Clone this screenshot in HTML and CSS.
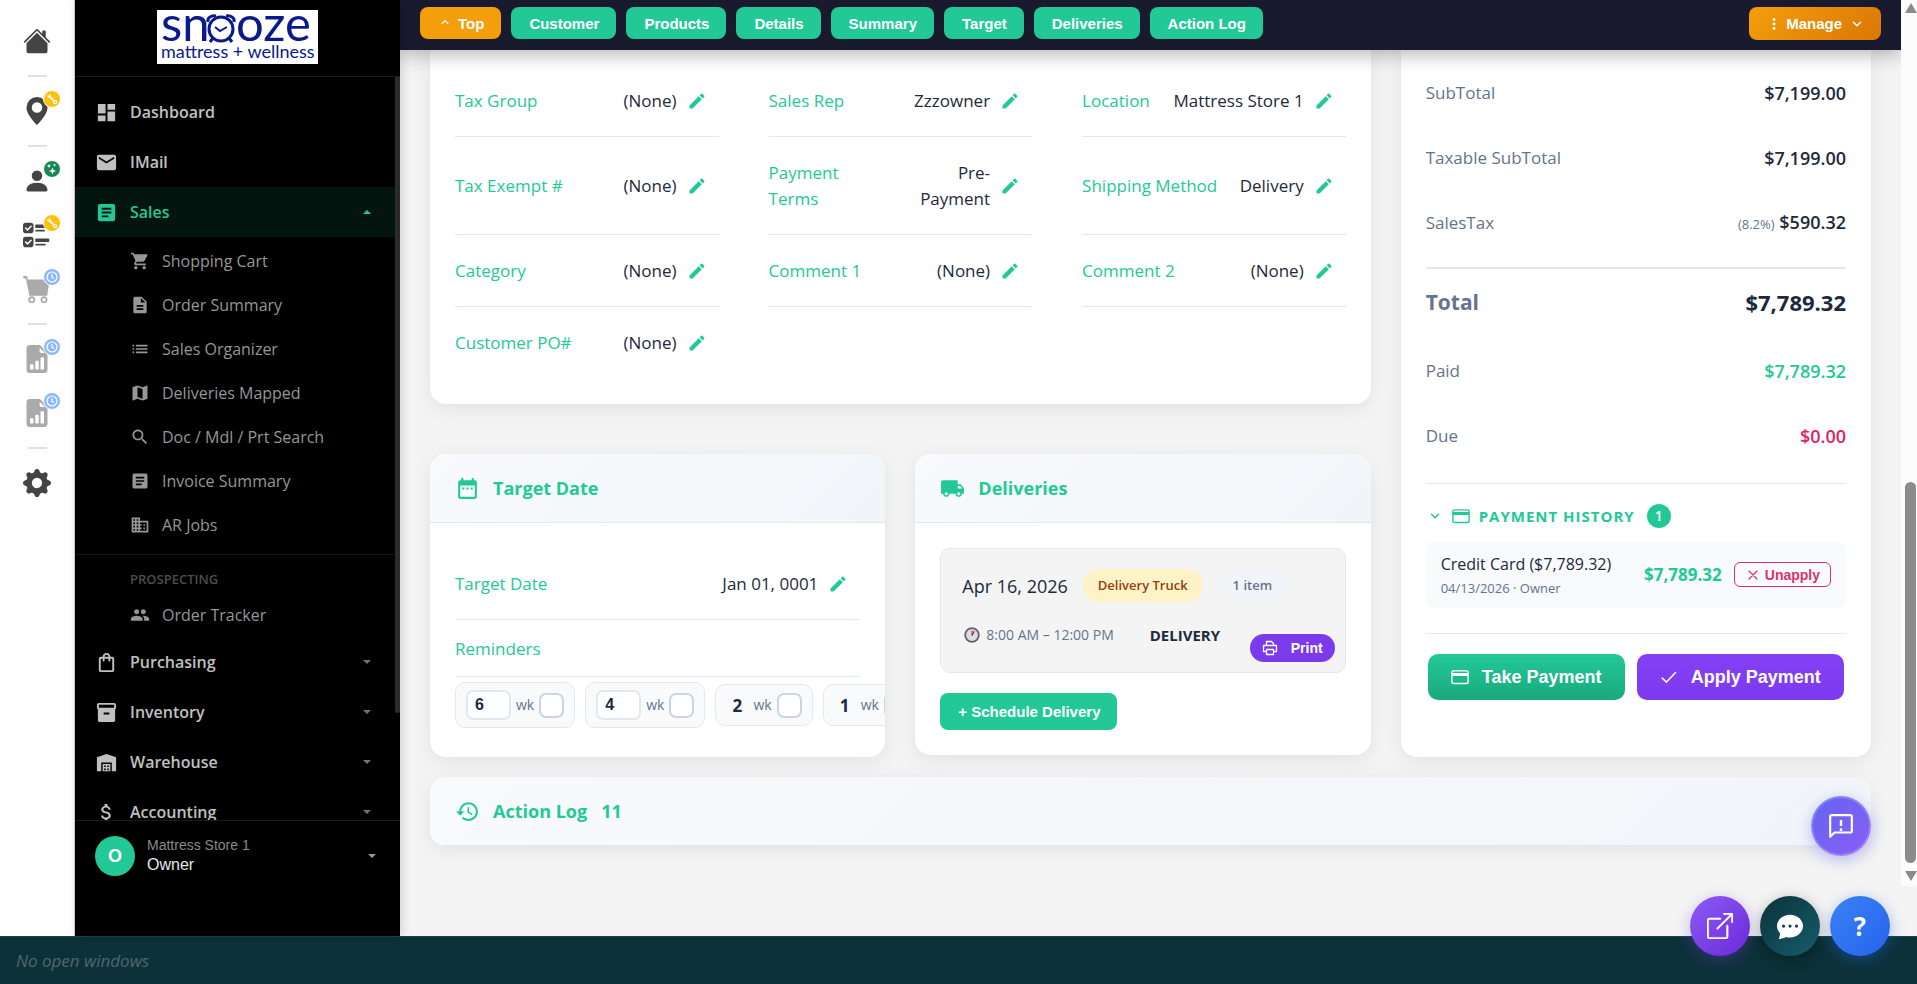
FILE: index.html
```html
<!DOCTYPE html>
<html lang="en">
<head>
    <meta charset="UTF-8">
    <meta name="viewport" content="width=device-width, initial-scale=1.0">
    <title>Sales Order</title>
    <link rel="stylesheet" href="styles.css">
</head>
<body>
    <!-- Icon sprite -->
    <svg class="sprite" aria-hidden="true">
        <symbol id="i-house" viewBox="0 0 16 16"><path d="M8.707 1.5a1 1 0 0 0-1.414 0L.646 8.146a.5.5 0 0 0 .708.708L8 2.207l6.646 6.647a.5.5 0 0 0 .708-.708L13 5.793V2.5a.5.5 0 0 0-.5-.5h-1a.5.5 0 0 0-.5.5v1.293z"/><path d="m8 3.293 6 6V13.5a1.5 1.5 0 0 1-1.5 1.5h-9A1.5 1.5 0 0 1 2 13.5V9.293z"/></symbol>
        <symbol id="i-pin" viewBox="0 0 16 16"><path d="M8 16s6-5.686 6-10A6 6 0 0 0 2 6c0 4.314 6 10 6 10m0-7a3 3 0 1 1 0-6 3 3 0 0 1 0 6"/></symbol>
        <symbol id="i-person" viewBox="0 0 16 16"><path d="M3 14s-1 0-1-1 1-4 6-4 6 3 6 4-1 1-1 1zm5-6a3 3 0 1 0 0-6 3 3 0 0 0 0 6"/></symbol>
        <symbol id="i-checks" viewBox="0 0 16 16"><rect x="0" y="1" width="6" height="6" rx="1.6"/><rect x="0" y="9" width="6" height="6" rx="1.6"/><path d="M1.5 4l1.1 1.1 2-2.1M1.5 12l1.1 1.1 2-2.1" fill="none" stroke="#fff" stroke-width=".9" stroke-linecap="round"/><rect x="7" y="2" width="8" height="2" rx=".5"/><rect x="7" y="5" width="5.500" height="1" rx=".5"/><rect x="7" y="10" width="8" height="2" rx=".5"/><rect x="7" y="13" width="6" height="1" rx=".5"/></symbol>
        <symbol id="i-bigcart" viewBox="0 0 16 16"><path d="M.5 1H2l.4 2h12.300l-1.200 8.500H4L2 1.600H.5z" stroke="currentColor" stroke-width=".8" stroke-linejoin="round"/><path d="M5 12.600a1.500 1.500 0 1 0 0 3 1.500 1.500 0 0 0 0-3zm7 0a1.500 1.500 0 1 0 0 3 1.500 1.500 0 0 0 0-3z" fill="#fff" stroke="currentColor" stroke-width="1"/></symbol>
        <symbol id="i-report" viewBox="0 0 16 16"><path d="M9.293 0H4a2 2 0 0 0-2 2v12a2 2 0 0 0 2 2h8a2 2 0 0 0 2-2V4.707A1 1 0 0 0 13.707 4L10 .293A1 1 0 0 0 9.293 0M9.500 3.500v-2l3 3h-2a1 1 0 0 1-1-1m.5 10v-6a.5.5 0 0 1 .5-.5h1a.5.5 0 0 1 .5.5v6a.5.5 0 0 1-.5.5h-1a.5.5 0 0 1-.5-.5m-2.500.5a.5.5 0 0 1-.5-.5v-4a.5.5 0 0 1 .5-.5h1a.5.5 0 0 1 .5.5v4a.5.5 0 0 1-.5.5zm-3 0a.5.5 0 0 1-.5-.5v-2a.5.5 0 0 1 .5-.5h1a.5.5 0 0 1 .5.5v2a.5.5 0 0 1-.5.5z"/></symbol>
        <symbol id="i-gear" viewBox="0 0 16 16"><path d="M9.405 1.050c-.413-1.400-2.397-1.400-2.810 0l-.1.34a1.464 1.464 0 0 1-2.105.872l-.31-.17c-1.283-.698-2.686.705-1.987 1.987l.169.311c.446.82.023 1.841-.872 2.105l-.34.1c-1.400.413-1.400 2.397 0 2.810l.34.1a1.464 1.464 0 0 1 .872 2.105l-.17.31c-.698 1.283.705 2.686 1.987 1.987l.311-.169a1.464 1.464 0 0 1 2.105.872l.1.34c.413 1.400 2.397 1.400 2.810 0l.1-.34a1.464 1.464 0 0 1 2.105-.872l.31.17c1.283.698 2.686-.705 1.987-1.987l-.169-.311a1.464 1.464 0 0 1 .872-2.105l.34-.1c1.400-.413 1.400-2.397 0-2.810l-.34-.1a1.464 1.464 0 0 1-.872-2.105l.17-.31c.698-1.283-.705-2.686-1.987-1.987l-.311.169a1.464 1.464 0 0 1-2.105-.872zM8 10.930a2.929 2.929 0 1 1 0-5.860 2.929 2.929 0 0 1 0 5.858z"/></symbol>
        <symbol id="i-wrench" viewBox="0 0 16 16"><path d="M6 6l4.500 4.500" stroke="#fff" stroke-width="2" fill="none"/><path d="M3 4.600 5 4.800 5 3A2.500 2.500 0 0 1 6.600 6.600 2.500 2.500 0 0 1 3 4.600z" fill="#fff"/><circle cx="11.200" cy="11.200" r="1.500" fill="none" stroke="#fff" stroke-width="1.300"/></symbol>
        <symbol id="i-sparkle" viewBox="0 0 16 16"><path d="M8.500 6.500l1 2.500 2.500 1-2.500 1-1 2.500-1-2.500-2.500-1 2.500-1zM5 3l.7 1.300L7 5l-1.300.7L5 7l-.7-1.300L3 5l1.300-.7zM10.500 2.500l.5 1.100 1.100.5-1.100.5-.5 1.100-.5-1.100-1.100-.5 1.100-.5z" fill="#fff"/></symbol>
        <symbol id="i-clock" viewBox="0 0 16 16"><circle cx="8" cy="8" r="5" fill="none" stroke="#fff" stroke-width="1.200"/><path d="M8 5v3.300l2 1.200" fill="none" stroke="#fff" stroke-width="1.200"/></symbol>

        <symbol id="i-dashboard" viewBox="0 0 24 24"><path d="M3 13h8V3H3v10zm0 8h8v-6H3v6zm10 0h8V11h-8v10zm0-18v6h8V3h-8z"/></symbol>
        <symbol id="i-mail" viewBox="0 0 24 24"><path d="M20 4H4c-1.100 0-1.990.9-1.990 2L2 18c0 1.100.9 2 2 2h16c1.100 0 2-.9 2-2V6c0-1.100-.9-2-2-2zm0 4l-8 5-8-5V6l8 5 8-5v2z"/></symbol>
        <symbol id="i-article" viewBox="0 0 24 24"><path d="M19 3H5c-1.100 0-2 .9-2 2v14c0 1.100.9 2 2 2h14c1.100 0 2-.9 2-2V5c0-1.100-.9-2-2-2zm-5 14H7v-2h7v2zm3-4H7v-2h10v2zm0-4H7V7h10v2z"/></symbol>
        <symbol id="i-cart" viewBox="0 0 24 24"><path d="M7 18c-1.100 0-1.990.9-1.990 2S5.900 22 7 22s2-.9 2-2-.9-2-2-2zM1 2v2h2l3.600 7.590-1.350 2.450c-.16.28-.25.61-.25.96 0 1.100.9 2 2 2h12v-2H7.420c-.14 0-.25-.11-.25-.25l.03-.12.9-1.630h7.450c.75 0 1.410-.41 1.750-1.030l3.580-6.490c.08-.14.12-.31.12-.48 0-.55-.45-1-1-1H5.210l-.94-2H1zm16 16c-1.100 0-1.990.9-1.990 2s.89 2 1.990 2 2-.9 2-2-.9-2-2-2z"/></symbol>
        <symbol id="i-doc" viewBox="0 0 24 24"><path d="M14 2H6c-1.100 0-1.990.9-1.990 2L4 20c0 1.100.89 2 1.990 2H18c1.100 0 2-.9 2-2V8l-6-6zm2 16H8v-2h8v2zm0-4H8v-2h8v2zm-3-5V3.500L18.500 9H13z"/></symbol>
        <symbol id="i-list" viewBox="0 0 24 24"><path d="M3 13h2v-2H3v2zm0 4h2v-2H3v2zm0-8h2V7H3v2zm4 4h14v-2H7v2zm0 4h14v-2H7v2zM7 7v2h14V7H7z"/></symbol>
        <symbol id="i-map" viewBox="0 0 24 24"><path d="M20.500 3l-.16.03L15 5.100 9 3 3.360 4.900c-.21.07-.36.25-.36.48V20.500c0 .28.22.5.5.5l.16-.03L9 18.900l6 2.100 5.640-1.900c.21-.07.36-.25.36-.48V3.500c0-.28-.22-.5-.5-.5zM15 19l-6-2.110V5l6 2.110V19z"/></symbol>
        <symbol id="i-search" viewBox="0 0 24 24"><path d="M15.500 14h-.79l-.28-.27C15.410 12.590 16 11.110 16 9.500 16 5.910 13.090 3 9.500 3S3 5.910 3 9.500 5.910 16 9.500 16c1.610 0 3.090-.59 4.230-1.570l.27.28v.79l5 4.990L20.490 19l-4.990-5zm-6 0C7.010 14 5 11.990 5 9.500S7.010 5 9.500 5 14 7.010 14 9.500 11.990 14 9.500 14z"/></symbol>
        <symbol id="i-business" viewBox="0 0 24 24"><path d="M12 7V3H2v18h20V7H12zM6 19H4v-2h2v2zm0-4H4v-2h2v2zm0-4H4V9h2v2zm0-4H4V5h2v2zm4 12H8v-2h2v2zm0-4H8v-2h2v2zm0-4H8V9h2v2zm0-4H8V5h2v2zm10 12h-8v-2h2v-2h-2v-2h2v-2h-2V9h8v10zm-2-8h-2v2h2v-2zm0 4h-2v2h2v-2z"/></symbol>
        <symbol id="i-people" viewBox="0 0 24 24"><path d="M16 11c1.660 0 2.990-1.340 2.990-3S17.660 5 16 5c-1.660 0-3 1.340-3 3s1.340 3 3 3zm-8 0c1.660 0 2.990-1.340 2.990-3S9.660 5 8 5C6.340 5 5 6.340 5 8s1.340 3 3 3zm0 2c-2.330 0-7 1.170-7 3.500V19h14v-2.500c0-2.330-4.670-3.500-7-3.500zm8 0c-.29 0-.62.02-.97.05 1.160.84 1.970 1.970 1.970 3.450V19h6v-2.500c0-2.330-4.670-3.500-7-3.500z"/></symbol>
        <symbol id="i-bag" viewBox="0 0 24 24"><path d="M18 6h-2c0-2.210-1.790-4-4-4S8 3.790 8 6H6c-1.100 0-2 .9-2 2v12c0 1.100.9 2 2 2h12c1.100 0 2-.9 2-2V8c0-1.100-.9-2-2-2zm-6-2c1.100 0 2 .9 2 2h-4c0-1.100.9-2 2-2zm6 16H6V8h2v2c0 .55.45 1 1 1s1-.45 1-1V8h4v2c0 .55.45 1 1 1s1-.45 1-1V8h2v12z"/></symbol>
        <symbol id="i-inventory" viewBox="0 0 24 24"><path d="M20 2H4c-1 0-2 .9-2 2v3.010c0 .72.43 1.340 1 1.690V20c0 1.100 1.100 2 2 2h14c.9 0 2-.9 2-2V8.700c.57-.35 1-.97 1-1.690V4c0-1.100-1-2-2-2zm-5 12H9v-2h6v2zm5-7H4V4h16v3z"/></symbol>
        <symbol id="i-warehouse" viewBox="0 0 24 24"><path fill-rule="evenodd" d="M22 21V6.500L12 3 2 6.500V21h4.500v-9h11v9H22zM8 13.500h8V21H8zM9.500 15v1.800h1.700V15zM12.800 15v1.800h1.700V15zM9.500 18.200V20h1.700v-1.800zM12.800 18.200V20h1.700v-1.800z"/></symbol>
        <symbol id="i-money" viewBox="0 0 24 24"><path d="M11.800 10.900c-2.270-.59-3-1.200-3-2.150 0-1.090 1.010-1.850 2.700-1.850 1.780 0 2.440.85 2.500 2.100h2.210c-.07-1.720-1.120-3.300-3.210-3.810V3h-3v2.160c-1.940.42-3.500 1.680-3.500 3.610 0 2.310 1.910 3.460 4.700 4.130 2.500.6 3 1.480 3 2.410 0 .69-.49 1.790-2.700 1.790-2.060 0-2.870-.92-2.980-2.100h-2.200c.12 2.190 1.760 3.420 3.680 3.830V21h3v-2.150c1.950-.37 3.500-1.500 3.500-3.550 0-2.840-2.430-3.810-4.700-4.400z"/></symbol>
        <symbol id="i-caret" viewBox="0 0 8 8"><path d="M0 2h8L4 6z"/></symbol>
        <symbol id="i-edit" viewBox="0 0 24 24"><path d="M3 17.250V21h3.750L17.810 9.940l-3.750-3.750L3 17.250zM20.710 7.040c.39-.39.39-1.020 0-1.410l-2.340-2.340c-.39-.39-1.020-.39-1.410 0l-1.830 1.830 3.750 3.750 1.830-1.830z"/></symbol>
        <symbol id="i-calendar" viewBox="0 0 24 24"><path d="M9 11H7v2h2v-2zm4 0h-2v2h2v-2zm4 0h-2v2h2v-2zm2-7h-1V2h-2v2H8V2H6v2H5c-1.110 0-1.990.9-1.990 2L3 20c0 1.100.89 2 2 2h14c1.100 0 2-.9 2-2V6c0-1.100-.9-2-2-2zm0 16H5V9h14v11z"/></symbol>
        <symbol id="i-truck" viewBox="0 0 24 24"><path d="M20 8h-3V4H3c-1.100 0-2 .9-2 2v11h2c0 1.660 1.340 3 3 3s3-1.340 3-3h6c0 1.660 1.340 3 3 3s3-1.340 3-3h2v-5l-3-4zM6 18.500c-.83 0-1.500-.67-1.500-1.500s.67-1.500 1.500-1.500 1.500.67 1.500 1.500-.67 1.500-1.500 1.500zm13.500-9l1.960 2.500H17V9.500h2.500zm-1.500 9c-.83 0-1.500-.67-1.500-1.500s.67-1.500 1.500-1.500 1.500.67 1.500 1.500-.67 1.500-1.500 1.500z"/></symbol>
        <symbol id="i-history" viewBox="0 0 24 24"><path d="M13 3c-4.970 0-9 4.030-9 9H1l3.890 3.890.07.14L9 12H6c0-3.870 3.130-7 7-7s7 3.130 7 7-3.130 7-7 7c-1.930 0-3.680-.79-4.940-2.060l-1.420 1.420C8.270 19.990 10.510 21 13 21c4.970 0 9-4.030 9-9s-4.030-9-9-9zm-1 5v5l4.280 2.540.72-1.210-3.500-2.080V8H12z"/></symbol>
        <symbol id="i-chev-down" viewBox="0 0 10 10"><path d="M1.500 3.200 5 6.700l3.500-3.500" fill="none" stroke="currentColor" stroke-width="1.500" stroke-linecap="round"/></symbol>
        <symbol id="i-chev-up" viewBox="0 0 10 10"><path d="M2 5.700 5 2.700l3 3" fill="none" stroke="currentColor" stroke-width="1.200" stroke-linecap="round"/></symbol>
        <symbol id="i-dots" viewBox="0 0 4 14"><circle cx="2" cy="2.500" r="1.400"/><circle cx="2" cy="7" r="1.400"/><circle cx="2" cy="11.500" r="1.400"/></symbol>
        <symbol id="i-card" viewBox="0 0 18 18"><rect x=".9" y="2.900" width="16.200" height="12.600" rx="1.500" fill="none" stroke="currentColor" stroke-width="1.400"/><path d="M1 5h16v3H1z"/></symbol>
        <symbol id="i-check" viewBox="0 0 16 16"><path d="M2 9 5.800 12.500l8-8.500" fill="none" stroke="currentColor" stroke-width="1.400" stroke-linecap="round" stroke-linejoin="round"/></symbol>
        <symbol id="i-x" viewBox="0 0 10 10"><path d="M1 1l8 8M9 1 1 9" fill="none" stroke="currentColor" stroke-width="1.200" stroke-linecap="round"/></symbol>
        <symbol id="i-print" viewBox="0 0 16 16"><path d="M4.500 5.500v-4h5l2 2v2M4.500 11.500h-3v-6h13v6h-3M4.500 9.500h7v5h-7z" fill="none" stroke="currentColor" stroke-width="1.300" stroke-linejoin="round"/></symbol>
        <symbol id="i-watch" viewBox="0 0 16 16"><circle cx="8" cy="8" r="6.800" fill="#dcdce4" stroke="#66616c" stroke-width="1.800"/><path d="M8 8.500V3.600" stroke="#d8345f" stroke-width="1.200"/><path d="M8 8.500l2.200-4.200" stroke="#444" stroke-width="1.200"/></symbol>
        <symbol id="i-feedback" viewBox="0 0 24 24"><path d="M2 22V3.500A1.500 1.500 0 0 1 3.500 2h17A1.500 1.500 0 0 1 22 3.500v13a1.500 1.500 0 0 1-1.500 1.500H6z" fill="none" stroke="currentColor" stroke-width="2" stroke-linejoin="round"/><path d="M12 6.500v5.500M12 14v2.500" stroke="currentColor" stroke-width="2.200"/></symbol>
        <symbol id="i-open" viewBox="0 0 16 16"><g stroke="currentColor" stroke-width=".3"><path d="M8.636 3.500a.5.5 0 0 0-.5-.5H1.500A1.500 1.500 0 0 0 0 4.500v10A1.500 1.500 0 0 0 1.500 16h10a1.500 1.500 0 0 0 1.500-1.500V7.864a.5.5 0 0 0-1 0V14.500a.5.5 0 0 1-.5.5h-10a.5.5 0 0 1-.5-.5v-10a.5.5 0 0 1 .5-.5h6.636a.5.5 0 0 0 .5-.5"/><path d="M16 .5a.5.5 0 0 0-.5-.5h-5a.5.5 0 0 0 0 1h3.793L6.146 9.146a.5.5 0 1 0 .708.708L15 1.707V5.500a.5.5 0 0 0 1 0z"/></g></symbol>
        <symbol id="i-chat" viewBox="0 0 16 16"><path d="M16 8c0 3.866-3.582 7-8 7a9 9 0 0 1-2.347-.306c-.584.296-1.925.864-4.181 1.234-.2.032-.352-.176-.273-.362.354-.836.674-1.950.77-2.966C.744 11.370 0 9.760 0 8c0-3.866 3.582-7 8-7s8 3.134 8 7M5 8a1 1 0 1 0-2 0 1 1 0 0 0 2 0m4 0a1 1 0 1 0-2 0 1 1 0 0 0 2 0m3 1a1 1 0 1 0 0-2 1 1 0 0 0 0 2"/></symbol>
    </svg>

    <div class="app">
        <nav class="rail">
            <a class="rail-item" href="#" aria-label="Home"><svg class="icon"><use href="#i-house"/></svg></a>
            <hr>
            <a class="rail-item" href="#" aria-label="Stores"><svg class="icon"><use href="#i-pin"/></svg><svg class="rail-badge yellow"><use href="#i-wrench"/></svg></a>
            <hr>
            <a class="rail-item" href="#" aria-label="Customers"><svg class="icon"><use href="#i-person"/></svg><svg class="rail-badge green"><use href="#i-sparkle"/></svg></a>
            <a class="rail-item" href="#" aria-label="Tasks"><svg class="icon"><use href="#i-checks"/></svg><svg class="rail-badge yellow"><use href="#i-wrench"/></svg></a>
            <a class="rail-item muted" href="#" aria-label="Cart"><svg class="icon"><use href="#i-bigcart"/></svg><svg class="rail-badge blue"><use href="#i-clock"/></svg></a>
            <hr>
            <a class="rail-item muted" href="#" aria-label="Sales report"><svg class="icon"><use href="#i-report"/></svg><svg class="rail-badge blue"><use href="#i-clock"/></svg></a>
            <a class="rail-item muted" href="#" aria-label="Stock report"><svg class="icon"><use href="#i-report"/></svg><svg class="rail-badge blue"><use href="#i-clock"/></svg></a>
            <hr>
            <a class="rail-item" href="#" aria-label="Settings"><svg class="icon"><use href="#i-gear"/></svg></a>
        </nav>

        <aside class="sidebar">
            <div class="logo">
                <svg width="161" height="54" viewBox="0 0 161 54">
                    <rect width="161" height="54" fill="#fff"/>
                    <g fill="#0a1a8c">
                        <text class="logo-name" x="4" y="31">sn</text>
                        <text class="logo-name" x="79" y="31">oze</text>
                        <text class="logo-tag" x="4" y="48">mattress + wellness</text>
                    </g>
                    <g fill="none" stroke="#0a1a8c" stroke-width="3">
                        <circle cx="64" cy="19" r="12"/>
                        <path d="M58 17l5 4 7-4" stroke-width="2"/>
                        <path d="M51 12c-1-4 3-7 8-6M77 12c1-4-3-7-8-6" stroke-width="3"/>
                        <path d="M56 28l-3 4M72 28l3 4"/>
                    </g>
                </svg>
            </div>
            <div class="menu-wrap">
                <ul class="menu">
                    <li><a class="menu-link" href="#"><svg class="icon"><use href="#i-dashboard"/></svg>Dashboard</a></li>
                    <li><a class="menu-link" href="#"><svg class="icon"><use href="#i-mail"/></svg>IMail</a></li>
                    <li>
                        <a class="menu-link active" href="#"><svg class="icon"><use href="#i-article"/></svg>Sales<svg class="caret up"><use href="#i-caret"/></svg></a>
                        <ul class="submenu">
                            <li><a href="#"><svg class="icon"><use href="#i-cart"/></svg>Shopping Cart</a></li>
                            <li><a href="#"><svg class="icon"><use href="#i-doc"/></svg>Order Summary</a></li>
                            <li><a href="#"><svg class="icon"><use href="#i-list"/></svg>Sales Organizer</a></li>
                            <li><a href="#"><svg class="icon"><use href="#i-map"/></svg>Deliveries Mapped</a></li>
                            <li><a href="#"><svg class="icon"><use href="#i-search"/></svg>Doc / Mdl / Prt Search</a></li>
                            <li><a href="#"><svg class="icon"><use href="#i-article"/></svg>Invoice Summary</a></li>
                            <li><a href="#"><svg class="icon"><use href="#i-business"/></svg>AR Jobs</a></li>
                        </ul>
                        <div class="menu-heading">PROSPECTING</div>
                        <ul class="submenu last">
                            <li><a href="#"><svg class="icon"><use href="#i-people"/></svg>Order Tracker</a></li>
                        </ul>
                    </li>
                    <li><a class="menu-link" href="#"><svg class="icon"><use href="#i-bag"/></svg>Purchasing<svg class="caret"><use href="#i-caret"/></svg></a></li>
                    <li><a class="menu-link" href="#"><svg class="icon"><use href="#i-inventory"/></svg>Inventory<svg class="caret"><use href="#i-caret"/></svg></a></li>
                    <li><a class="menu-link" href="#"><svg class="icon"><use href="#i-warehouse"/></svg>Warehouse<svg class="caret"><use href="#i-caret"/></svg></a></li>
                    <li><a class="menu-link" href="#"><svg class="icon"><use href="#i-money"/></svg>Accounting<svg class="caret"><use href="#i-caret"/></svg></a></li>
                </ul>
                <div class="menu-scroll"></div>
            </div>
            <div class="user">
                <div class="avatar">O</div>
                <div class="user-text">
                    <div class="user-store">Mattress Store 1</div>
                    <div class="user-name">Owner</div>
                </div>
                <svg class="caret"><use href="#i-caret"/></svg>
            </div>
        </aside>

        <main class="main">
            <div class="topbar">
                <button class="btn-nav btn-top"><svg><use href="#i-chev-up"/></svg>Top</button>
                <button class="btn-nav">Customer</button>
                <button class="btn-nav">Products</button>
                <button class="btn-nav">Details</button>
                <button class="btn-nav">Summary</button>
                <button class="btn-nav">Target</button>
                <button class="btn-nav">Deliveries</button>
                <button class="btn-nav">Action Log</button>
                <button class="btn-nav btn-manage"><svg class="dots"><use href="#i-dots"/></svg>Manage<svg><use href="#i-chev-down"/></svg></button>
            </div>

            <div class="content">
                <div class="columns">
                    <div class="left">
                        <section class="card details">
                            <div class="field"><span class="field-label">Tax Group</span><span class="field-value">(None)</span><button class="edit" aria-label="Edit tax group"><svg><use href="#i-edit"/></svg></button></div>
                            <div class="field"><span class="field-label">Sales Rep</span><span class="field-value">Zzzowner</span><button class="edit" aria-label="Edit sales rep"><svg><use href="#i-edit"/></svg></button></div>
                            <div class="field"><span class="field-label">Location</span><span class="field-value">Mattress Store 1</span><button class="edit" aria-label="Edit location"><svg><use href="#i-edit"/></svg></button></div>
                            <div class="field"><span class="field-label">Tax Exempt #</span><span class="field-value">(None)</span><button class="edit" aria-label="Edit tax exempt number"><svg><use href="#i-edit"/></svg></button></div>
                            <div class="field"><span class="field-label">Payment<br>Terms</span><span class="field-value">Pre-<br>Payment</span><button class="edit" aria-label="Edit payment terms"><svg><use href="#i-edit"/></svg></button></div>
                            <div class="field"><span class="field-label">Shipping Method</span><span class="field-value">Delivery</span><button class="edit" aria-label="Edit shipping method"><svg><use href="#i-edit"/></svg></button></div>
                            <div class="field"><span class="field-label">Category</span><span class="field-value">(None)</span><button class="edit" aria-label="Edit category"><svg><use href="#i-edit"/></svg></button></div>
                            <div class="field"><span class="field-label">Comment 1</span><span class="field-value">(None)</span><button class="edit" aria-label="Edit comment 1"><svg><use href="#i-edit"/></svg></button></div>
                            <div class="field"><span class="field-label">Comment 2</span><span class="field-value">(None)</span><button class="edit" aria-label="Edit comment 2"><svg><use href="#i-edit"/></svg></button></div>
                            <div class="field no-line"><span class="field-label">Customer PO#</span><span class="field-value">(None)</span><button class="edit" aria-label="Edit customer PO"><svg><use href="#i-edit"/></svg></button></div>
                        </section>

                        <div class="pair">
                            <section class="card">
                                <h2 class="card-header"><svg class="icon"><use href="#i-calendar"/></svg>Target Date</h2>
                                <div class="card-body target-body">
                                    <div class="field"><span class="field-label">Target Date</span><span class="field-value">Jan 01, 0001</span><button class="edit" aria-label="Edit target date"><svg><use href="#i-edit"/></svg></button></div>
                                    <div class="field short"><span class="field-label">Reminders</span></div>
                                    <div class="reminders">
                                        <div class="chip"><input class="weeks" type="text" value="6" aria-label="First reminder weeks"><label for="rem1">wk</label><input type="checkbox" id="rem1"></div>
                                        <div class="chip"><input class="weeks" type="text" value="4" aria-label="Second reminder weeks"><label for="rem2">wk</label><input type="checkbox" id="rem2"></div>
                                        <div class="chip"><b>2</b><label for="rem3">wk</label><input type="checkbox" id="rem3"></div>
                                        <div class="chip"><b>1</b><label for="rem4">wk</label><input type="checkbox" id="rem4"></div>
                                    </div>
                                </div>
                            </section>

                            <section class="card">
                                <h2 class="card-header"><svg class="icon"><use href="#i-truck"/></svg>Deliveries</h2>
                                <div class="card-body">
                                    <div class="delivery">
                                        <div class="delivery-top">
                                            <span class="delivery-date">Apr 16, 2026</span>
                                            <span class="pill pill-truck">Delivery Truck</span>
                                            <span class="pill">1 item</span>
                                        </div>
                                        <div class="delivery-info">
                                            <svg><use href="#i-watch"/></svg>
                                            <span class="delivery-time">8:00 AM – 12:00 PM</span>
                                            <span class="delivery-type">DELIVERY</span>
                                        </div>
                                        <button class="btn-print"><svg><use href="#i-print"/></svg>Print</button>
                                    </div>
                                    <button class="btn-schedule">+ Schedule Delivery</button>
                                </div>
                            </section>
                        </div>
                    </div>

                    <section class="card summary">
                        <div class="sum-row"><span>SubTotal</span><b>$7,199.00</b></div>
                        <div class="sum-row"><span>Taxable SubTotal</span><b>$7,199.00</b></div>
                        <div class="sum-row"><span>SalesTax</span><b><small>(8.2%)</small> $590.32</b></div>
                        <div class="sum-row total"><span>Total</span><b>$7,789.32</b></div>
                        <div class="sum-row"><span>Paid</span><b class="paid">$7,789.32</b></div>
                        <div class="sum-row"><span>Due</span><b class="due">$0.00</b></div>

                        <div class="history">
                            <button class="history-title"><svg class="chev"><use href="#i-chev-down"/></svg><svg class="card-icon"><use href="#i-card"/></svg>PAYMENT HISTORY<span class="count">1</span></button>
                            <div class="payment">
                                <div class="payment-text">
                                    <div class="payment-name">Credit Card ($7,789.32)</div>
                                    <div class="payment-meta">04/13/2026 · Owner</div>
                                </div>
                                <span class="payment-amount">$7,789.32</span>
                                <button class="btn-unapply"><svg><use href="#i-x"/></svg>Unapply</button>
                            </div>
                        </div>

                        <div class="pay-actions">
                            <button class="btn-pay take"><svg><use href="#i-card"/></svg>Take Payment</button>
                            <button class="btn-pay apply"><svg><use href="#i-check"/></svg>Apply Payment</button>
                        </div>
                    </section>
                </div>

                <section class="card">
                    <h2 class="card-header"><svg class="icon"><use href="#i-history"/></svg>Action Log<span class="log-count">11</span></h2>
                </section>
            </div>
        </main>

        <div class="scrollbar">
            <svg width="12" height="10" viewBox="0 0 12 10"><path d="M6 0l6 10H0z"/></svg>
            <div class="thumb"></div>
            <svg width="12" height="10" viewBox="0 0 12 10"><path d="M6 10L0 0h12z"/></svg>
        </div>
    </div>

    <footer class="taskbar">No open windows</footer>

    <button class="fab feedback" aria-label="Send feedback"><svg><use href="#i-feedback"/></svg></button>
    <div class="fab-row">
        <button class="fab open" aria-label="Open in new window"><svg><use href="#i-open"/></svg></button>
        <button class="fab chat" aria-label="Chat"><svg><use href="#i-chat"/></svg></button>
        <button class="fab help">?</button>
    </div>
</body>
</html>
```

FILE: styles.css
```css
:root {
    --green: #22c997;
    --orange: #f59e0b;
    --purple: #7c3aed;
    --pink: #d6336c;
    --dark: #1e293b;
    --slate: #64748b;
    --line: #e2e8f0;
    --page: #f4f4f4;
    --font-body: "Open Sans", "Noto Sans", sans-serif;
    --font-button: "Liberation Sans", Arial, sans-serif;
}

* {
    box-sizing: border-box;
}

body {
    margin: 0;
    height: 100vh;
    display: flex;
    flex-direction: column;
    overflow: hidden;
    background: var(--page);
    color: var(--dark);
    font-family: var(--font-body);
    font-size: 17px;
    line-height: 26px;
}

ul {
    list-style: none;
    margin: 0;
    padding: 0;
}

a {
    color: inherit;
    text-decoration: none;
}

button {
    border: none;
    padding: 0;
    background: none;
    color: inherit;
    font-family: var(--font-button);
    font-weight: 700;
    cursor: pointer;
}

svg {
    fill: currentColor;
    flex: none;
}

.sprite {
    position: absolute;
    width: 0;
    height: 0;
}

.app {
    flex: 1;
    min-height: 0;
    display: flex;
}

/* Icon rail */
.rail {
    width: 75px;
    flex: none;
    padding-top: 14px;
    background: #fefefe;
    border-right: 1px solid #ccc;
    color: #444;
}

.rail hr {
    width: 19px;
    height: 2px;
    margin: 7px auto;
    border: none;
    background: #dee2e6;
}

.rail-item {
    position: relative;
    height: 54px;
    display: flex;
    align-items: center;
    justify-content: center;
}

.rail-item .icon {
    width: 28px;
    height: 28px;
}

.rail-item.muted {
    color: #aaa;
}

.rail-badge {
    position: absolute;
    top: 6px;
    right: 13px;
    width: 18px;
    height: 18px;
    border: 1px solid #fff;
    border-radius: 50%;
}

.yellow { background: #ffc107; }
.green { background: #198754; }
.blue { background: #8bb9fe; }

/* Sidebar */
.sidebar {
    width: 325px;
    flex: none;
    display: flex;
    flex-direction: column;
    background: #000;
    z-index: 3;
    box-shadow: 2px 0 10px rgba(0, 0, 0, 0.15);
}

.logo {
    height: 77px;
    flex: none;
    padding-top: 10px;
    display: flex;
    justify-content: center;
    border-bottom: 1px solid #1a1a1a;
}

.logo-name {
    font-family: Lato, sans-serif;
    font-size: 49px;
}

.logo-tag {
    font-family: Lato, sans-serif;
    font-size: 18px;
}

.menu-wrap {
    flex: 1;
    min-height: 0;
    display: flex;
    overflow: hidden;
}

.menu {
    flex: 1;
    padding-top: 10px;
}

.menu-scroll {
    width: 5px;
    height: 636px;
    background: #2b2b2b;
    border-radius: 0 0 3px 3px;
}

.menu-link {
    height: 50px;
    padding: 0 24px 0 20px;
    display: flex;
    align-items: center;
    gap: 12px;
    color: #c0c0c0;
    font-size: 16px;
    font-weight: 600;
}

.menu-link .icon {
    width: 23px;
    height: 23px;
}

.menu-link.active {
    background: #04140f;
    color: var(--green);
}

.caret {
    width: 8px;
    height: 8px;
    margin-left: auto;
    opacity: 0.6;
}

.caret.up {
    transform: rotate(180deg);
    opacity: 1;
}

.submenu {
    padding: 2px 0 7px;
    border-bottom: 1px solid #161616;
}

.submenu.last {
    padding: 0;
    border: none;
}

.submenu a {
    height: 44px;
    padding-left: 55px;
    display: flex;
    align-items: center;
    gap: 12px;
    color: #969696;
    font-size: 16px;
}

.submenu .icon {
    width: 20px;
    height: 20px;
}

.menu-heading {
    padding: 14px 0 4px 55px;
    color: #4d4d4d;
    font-size: 13px;
    font-weight: 600;
    line-height: 20px;
}

.user {
    height: 116px;
    flex: none;
    padding: 15px 24px 0 20px;
    display: flex;
    align-items: flex-start;
    border-top: 1px solid #1a1a1a;
    font-family: var(--font-button);
    line-height: 19px;
    color: #fff;
}

.user .caret {
    margin-top: 16px;
}

.avatar {
    width: 40px;
    height: 40px;
    margin-right: 12px;
    border-radius: 50%;
    background: var(--green);
    font-size: 18px;
    font-weight: 700;
    line-height: 40px;
    text-align: center;
}

.user-store {
    color: #888;
    font-size: 14px;
}

.user-name {
    color: #e8e8e8;
    font-size: 16px;
}

/* Top bar */
.main {
    flex: 1;
    min-width: 0;
    overflow: hidden;
}

.topbar {
    position: relative;
    z-index: 2;
    height: 50px;
    padding: 7px 20px 0;
    display: flex;
    align-items: flex-start;
    gap: 10px;
    background: #1a1a2e;
    box-shadow: 0 4px 20px rgba(0, 0, 0, 0.3);
}

.btn-nav {
    height: 32px;
    padding: 0 17px 0 18px;
    display: flex;
    align-items: center;
    gap: 8px;
    border-radius: 8px;
    background: var(--green);
    color: #fff;
    font-size: 15px;
}

.btn-nav svg {
    width: 10px;
    height: 10px;
}

.btn-nav .dots {
    width: 4px;
    height: 14px;
}

.btn-top {
    padding-left: 20px;
    background: var(--orange);
}

.btn-manage {
    height: 33px;
    margin-left: auto;
    padding: 0 19px 0 23px;
    gap: 10px;
    background: linear-gradient(135deg, #f59e0b, #d97706);
}

/* Cards */
.content {
    padding: 0 30px 30px;
}

.columns {
    display: grid;
    grid-template-columns: 2fr 1fr;
    gap: 30px;
    margin-bottom: 20px;
}

.left {
    min-width: 0;
}

.card {
    min-width: 0;
    overflow: hidden;
    background: #fff;
    border-radius: 16px;
    box-shadow: 0 4px 20px rgba(0, 0, 0, 0.08);
}

.card.details,
.card.summary {
    border-radius: 0 0 16px 16px;
}

.card-header {
    margin: 0;
    padding: 21px 25px;
    display: flex;
    align-items: center;
    gap: 13px;
    background: linear-gradient(135deg, #f8fafc, #f1f5f9);
    border-bottom: 1px solid var(--line);
    color: var(--green);
    font-size: 18px;
    font-weight: 700;
    line-height: 26px;
}

.card-header .icon {
    width: 25px;
    height: 25px;
}

.log-count {
    margin-left: 1px;
}

.card-body {
    padding: 25px;
}

.target-body {
    padding-bottom: 29px;
}

.details {
    padding: 15px 25px 25px;
    display: grid;
    grid-template-columns: repeat(3, 1fr);
    column-gap: 50px;
    margin-bottom: 50px;
}

.field {
    padding: 23px 15px 22px 0;
    display: flex;
    align-items: center;
    border-bottom: 1px solid var(--line);
    font-size: 17px;
    font-weight: 500;
    white-space: nowrap;
}

.field.no-line {
    border-bottom-color: transparent;
}

.field.short {
    padding: 16px 0 14px;
}

.field-label {
    color: var(--green);
}

.field-value {
    margin-left: auto;
    text-align: right;
}

.edit {
    margin-left: 10px;
    display: flex;
    color: var(--green);
}

.edit svg {
    width: 20px;
    height: 20px;
    margin-right: -3px;
}

.pair {
    display: grid;
    grid-template-columns: 1fr 1fr;
    align-items: start;
    gap: 30px;
}

/* Reminders */
.reminders {
    margin-top: 5px;
    display: flex;
    align-items: center;
    gap: 10px;
}

.chip {
    flex: none;
    padding: 7px 10px;
    display: flex;
    align-items: center;
    gap: 5px;
    background: #f8fafc;
    border: 1px solid var(--line);
    border-radius: 10px;
    color: var(--slate);
    font-size: 14px;
}

.chip b {
    width: 22px;
    color: var(--dark);
    font-size: 17px;
    line-height: 25px;
    text-align: center;
}

.weeks {
    width: 45px;
    height: 30px;
    padding: 0 7px;
    border: 2px solid var(--line);
    border-radius: 7px;
    background: #fff;
    color: var(--dark);
    font-family: var(--font-button);
    font-size: 16px;
    font-weight: 700;
}

.chip input[type="checkbox"] {
    appearance: none;
    width: 25px;
    height: 25px;
    margin: 0;
    border: 2px solid #cbd5e1;
    border-radius: 7px;
    background: #fff;
}

/* Deliveries */
.delivery {
    position: relative;
    margin-bottom: 20px;
    padding: 20px 21px;
    background: var(--page);
    border: 1px solid var(--line);
    border-radius: 10px;
}

.delivery-top {
    display: flex;
    align-items: center;
    gap: 15px;
    margin-bottom: 17px;
}

.delivery-date {
    font-size: 18px;
    font-weight: 500;
}

.pill {
    padding: 0 15px;
    border-radius: 17px;
    background: #f1f5f9;
    color: var(--slate);
    font-size: 13px;
    font-weight: 600;
    line-height: 33px;
}

.pill-truck {
    background: #fef3c7;
    color: #92400e;
}

.delivery-info {
    padding: 3px 0 4px;
    display: flex;
    align-items: center;
}

.delivery-info svg {
    width: 16px;
    height: 16px;
    margin: 0 6px 0 2px;
}

.delivery-time {
    margin-right: 36px;
    color: var(--slate);
    font-size: 14px;
}

.delivery-type {
    font-size: 15px;
    font-weight: 700;
}

.btn-print {
    position: absolute;
    right: 10px;
    bottom: 10px;
    height: 28px;
    padding: 0 12px;
    display: flex;
    align-items: center;
    gap: 13px;
    border-radius: 14px;
    background: var(--purple);
    color: #fff;
    font-size: 14px;
}

.btn-print svg {
    width: 16px;
    height: 16px;
}

.btn-schedule {
    display: block;
    height: 37px;
    padding: 0 17px 0 18px;
    border-radius: 8px;
    background: var(--green);
    color: #fff;
    font-size: 15px;
}

/* Order summary */
.summary {
    padding: 10px 25px 56px;
}

.sum-row {
    height: 65px;
    display: flex;
    align-items: center;
    justify-content: space-between;
    color: var(--slate);
    font-size: 17px;
}

.sum-row b {
    color: var(--dark);
    font-size: 18px;
    font-weight: 600;
}

.sum-row small {
    color: var(--slate);
    font-size: 13px;
    font-weight: 400;
}

.sum-row.total {
    height: 71px;
    margin-top: 12px;
    padding-bottom: 3px;
    border-top: 2px solid var(--line);
    font-weight: 700;
    font-size: 21px;
}

.sum-row.total b {
    font-size: 22px;
    font-weight: 700;
}

.sum-row .paid { color: var(--green); }
.sum-row .due { color: #e11d62; }

.history {
    margin-top: 15px;
    padding: 20px 0 25px;
    border-top: 1px solid var(--line);
    border-bottom: 1px solid var(--line);
}

.history-title {
    margin-bottom: 13px;
    padding-left: 4px;
    display: flex;
    align-items: center;
    color: var(--green);
    font-family: var(--font-body);
    font-size: 15px;
    letter-spacing: 1px;
    line-height: 24px;
}

.history-title .chev {
    width: 10px;
    height: 10px;
    margin-right: 12px;
}

.history-title .card-icon {
    width: 18px;
    height: 18px;
    margin-right: 9px;
}

.count {
    width: 24px;
    margin-left: 12px;
    border-radius: 50%;
    background: var(--green);
    color: #fff;
    font-size: 14px;
    font-weight: 600;
    letter-spacing: 0;
    text-align: center;
}

.payment {
    padding: 10px 15px;
    display: flex;
    align-items: center;
    background: #f8fafc;
    border-radius: 8px;
}

.payment-text {
    flex: 1;
}

.payment-name {
    font-size: 16px;
    font-weight: 500;
    line-height: 27px;
}

.payment-meta {
    color: var(--slate);
    font-size: 13px;
    line-height: 20px;
}

.payment-amount {
    margin-right: 12px;
    color: var(--green);
    font-size: 17px;
    font-weight: 700;
}

.btn-unapply {
    height: 25px;
    padding: 0 10px 0 13px;
    display: flex;
    align-items: center;
    gap: 7px;
    border: 1px solid var(--pink);
    border-radius: 6px;
    color: var(--pink);
    font-size: 14px;
}

.btn-unapply svg {
    width: 10px;
    height: 10px;
}

.pay-actions {
    margin-top: 20px;
    padding: 0 2px;
    display: flex;
    gap: 12px;
}

.btn-pay {
    flex: 1 1 auto;
    height: 46px;
    display: flex;
    align-items: center;
    justify-content: center;
    gap: 13px;
    border-radius: 10px;
    color: #fff;
    font-size: 18px;
}

.btn-pay svg {
    width: 18px;
    height: 18px;
}

.take { background: linear-gradient(#22c997, #1ba97f); }
.apply { background: linear-gradient(#8540f5, #7c3aed); }

/* Page scrollbar */
.scrollbar {
    width: 16px;
    flex: none;
    margin-bottom: 50px;
    padding: 3px 0 5px 3px;
    display: flex;
    flex-direction: column;
    align-items: center;
    background: #fcfcfc;
    color: #8b8b8b;
}

.thumb {
    width: 11px;
    height: 381px;
    margin: auto 0 8px;
    border-radius: 6px;
    background: #8b8b8b;
}

/* Task bar */
.taskbar {
    height: 48px;
    flex: none;
    padding-left: 16px;
    background: #0c3138;
    border-top: 1px solid #1d4048;
    color: #4f686d;
    font-size: 17px;
    font-style: italic;
    line-height: 48px;
}

/* Floating buttons */
.fab {
    width: 60px;
    height: 60px;
    display: flex;
    align-items: center;
    justify-content: center;
    border-radius: 50%;
    color: #fff;
}

.fab svg {
    width: 26px;
    height: 26px;
}

.fab-row {
    position: fixed;
    right: 27px;
    bottom: 28px;
    z-index: 5;
    display: flex;
    gap: 10px;
}

.feedback {
    position: fixed;
    right: 46px;
    bottom: 128px;
    z-index: 5;
    border: 2px solid rgba(255, 255, 255, 0.2);
    background: linear-gradient(135deg, #6366f1, #8b5cf6) border-box;
    box-shadow: 0 4px 16px rgba(99, 102, 241, 0.4);
}

.open {
    background: linear-gradient(135deg, #8b5cf6, #6d28d9);
    box-shadow: 0 4px 16px rgba(124, 58, 237, 0.35);
}

.chat {
    background: linear-gradient(135deg, #0c3138, #155e6e);
    box-shadow: 0 4px 16px rgba(0, 0, 0, 0.3);
}

.help {
    background: linear-gradient(135deg, #3b82f6, #2563eb);
    box-shadow: 0 4px 16px rgba(37, 99, 235, 0.4);
    font-family: var(--font-body);
    font-size: 26px;
}
```
